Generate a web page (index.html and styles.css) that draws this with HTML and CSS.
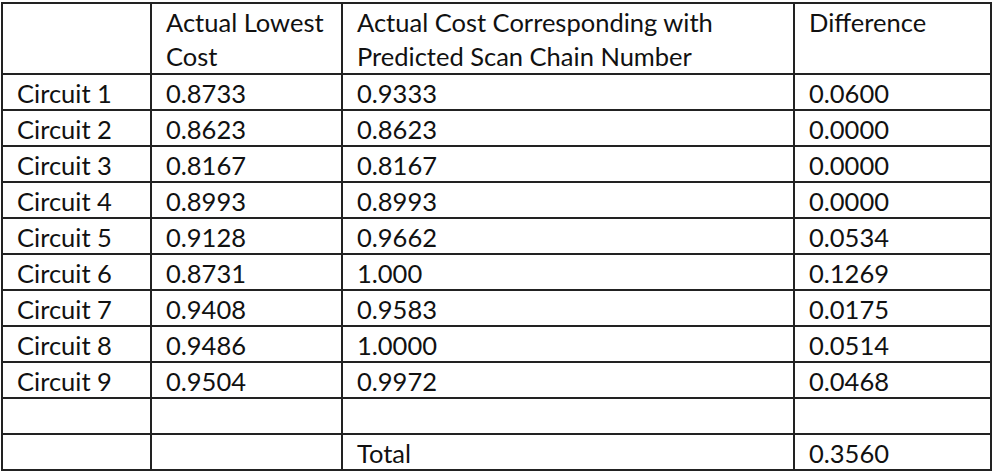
FILE: index.html
```html
<!DOCTYPE html>
<html>
<head>
<meta charset="utf-8">
<link rel="stylesheet" href="styles.css">
</head>
<body>
<table class="grid">
  <colgroup>
    <col class="c1"><col class="c2"><col class="c3"><col class="c4">
  </colgroup>
  <tr class="head">
    <td></td>
    <td>Actual Lowest<br>Cost</td>
    <td>Actual Cost Corresponding with<br>Predicted Scan Chain Number</td>
    <td>Difference</td>
  </tr>
  <tr><td>Circuit 1</td><td>0.8733</td><td>0.9333</td><td>0.0600</td></tr>
  <tr><td>Circuit 2</td><td>0.8623</td><td>0.8623</td><td>0.0000</td></tr>
  <tr><td>Circuit 3</td><td>0.8167</td><td>0.8167</td><td>0.0000</td></tr>
  <tr><td>Circuit 4</td><td>0.8993</td><td>0.8993</td><td>0.0000</td></tr>
  <tr><td>Circuit 5</td><td>0.9128</td><td>0.9662</td><td>0.0534</td></tr>
  <tr><td>Circuit 6</td><td>0.8731</td><td>1.000</td><td>0.1269</td></tr>
  <tr><td>Circuit 7</td><td>0.9408</td><td>0.9583</td><td>0.0175</td></tr>
  <tr><td>Circuit 8</td><td>0.9486</td><td>1.0000</td><td>0.0514</td></tr>
  <tr><td>Circuit 9</td><td>0.9504</td><td>0.9972</td><td>0.0468</td></tr>
  <tr><td></td><td></td><td></td><td></td></tr>
  <tr><td></td><td></td><td>Total</td><td>0.3560</td></tr>
</table>
</body>
</html>
```
FILE: styles.css
```css
html, body {
  margin: 0;
  padding: 0;
  background: #ffffff;
}
body {
  padding: 2px 0 0 1px;
}
.grid {
  border-collapse: collapse;
  table-layout: fixed;
  width: 989px;
  font-family: Lato, "Open Sans", sans-serif;
  font-size: 25.5px;
  color: #111111;
}
.c1 { width: 149px; }
.c2 { width: 191px; }
.c3 { width: 452px; }
.c4 { width: 197px; }
.grid td {
  border: 2px solid #222222;
  padding: 3px 0 0 14px;
  height: 36px;
  box-sizing: border-box;
  line-height: 31px;
  vertical-align: top;
  white-space: nowrap;
}
.grid tr.head td {
  height: 71px;
  padding-top: 1px;
  line-height: 34px;
}
```
